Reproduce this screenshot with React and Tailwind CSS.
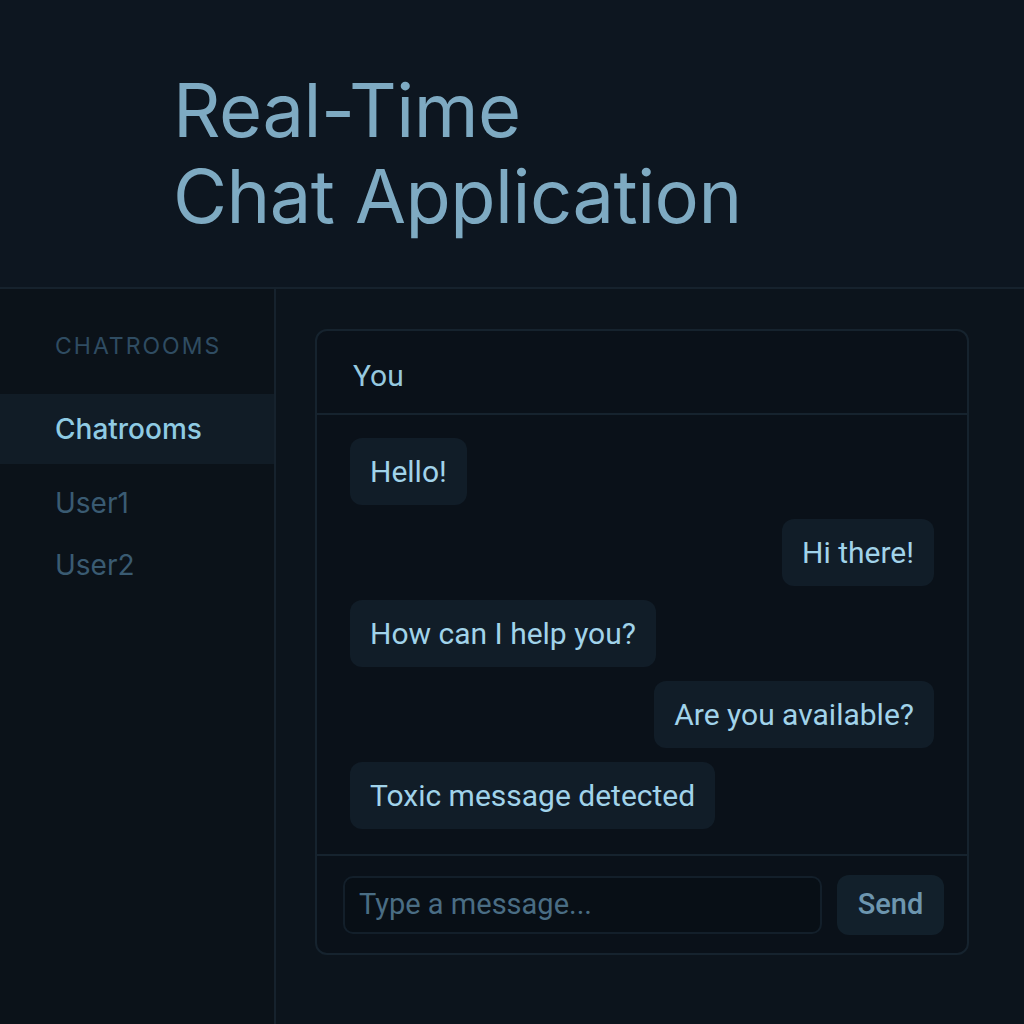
import React from "react";

const msgs = [
  { t: "Hello!", me: false },
  { t: "Hi there!", me: true },
  { t: "How can I help you?", me: false },
  { t: "Are you available?", me: true },
  { t: "Toxic message detected", me: false },
];

export default function App() {
  return (
    <div className="w-[1024px] h-[1024px] bg-[#0c141c] flex flex-col overflow-hidden" style={{ fontFamily: "Inter, 'Noto Sans', sans-serif" }}>
      <header className="h-[289px] shrink-0 border-b-2 border-[#16222d] bg-[#0d1620] pl-[173px] pt-[67px]">
        <h1 className="text-[74px] leading-[86px] font-normal text-[#7eaac2] tracking-[-0.5px]">
          Real-Time
          <br />
          Chat Application
        </h1>
      </header>
      <div className="flex flex-1 min-h-0">
        <aside className="w-[276px] shrink-0 border-r-2 border-[#16222d] bg-[#0b1219] pt-[43px]">
          <div className="pl-[55px] text-[23px] tracking-[2px] text-[#2f4c62] leading-[28px]">CHATROOMS</div>
          <div className="mt-[34px] h-[70px] bg-[#111c26] pl-[55px] flex items-center text-[28px] font-medium text-[#8fcbe3]">Chatrooms</div>
          <div className="pl-[55px] mt-[22px] text-[28px] leading-[34px] text-[#3a5b72]">User1</div>
          <div className="pl-[55px] mt-[28px] text-[28px] leading-[34px] text-[#3a5b72]">User2</div>
        </aside>
        <main className="flex-1 pl-[39px] pt-[40px]">
          <div className="w-[654px] h-[626px] rounded-[12px] border-2 border-[#16232e] bg-[#0a1119] flex flex-col" style={{ fontFamily: "Roboto, 'Noto Sans', sans-serif" }}>
            <div className="h-[84px] shrink-0 border-b-2 border-[#16232e] flex items-center pl-[36px] pt-[6px] text-[30px] text-[#96c9df]">You</div>
            <div className="flex-1 flex flex-col gap-[14px] px-[33px] pt-[23px]">
              {msgs.map((m, i) => (
                <div key={i} className={`flex ${m.me ? "justify-end" : "justify-start"}`}>
                  <div className="h-[67px] px-[20px] rounded-[12px] bg-[#111d28] flex items-center text-[30px] text-[#a1d3ea]">{m.t}</div>
                </div>
              ))}
            </div>
            <div className="h-[99px] shrink-0 border-t-2 border-[#16232e] flex items-center pl-[26px] pr-[23px] gap-[15px]">
              <div className="flex-1 h-[58px] rounded-[10px] border-2 border-[#131f2a] bg-[#080f16] flex items-center pl-[14px] text-[29px] text-[#4a6d84]">Type a message...</div>
              <div className="w-[107px] h-[60px] rounded-[12px] bg-[#12202b] flex items-center justify-center text-[29px] font-medium text-[#6d96af]">Send</div>
            </div>
          </div>
        </main>
      </div>
    </div>
  );
}
